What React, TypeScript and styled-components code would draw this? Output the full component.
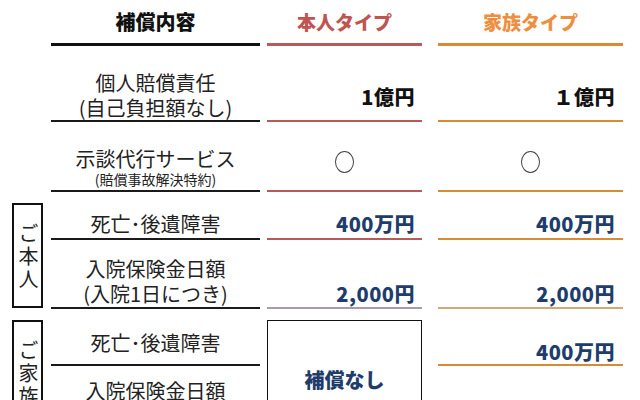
import React from "react";
import styled, { createGlobalStyle } from "styled-components";

const GlobalStyle = createGlobalStyle`
  html, body {
    margin: 0;
    padding: 0;
    background: #ffffff;
  }
  body {
    width: 640px;
    height: 400px;
    overflow: hidden;
    font-family: "Noto Sans CJK JP", "Noto Sans", sans-serif;
  }
`;

const RED = "#b85a5a";
const ORANGE = "#d98a35";
const NAVY = "#1f3d6b";

const Page = styled.div`
  width: 640px;
  height: 400px;
  overflow: hidden;
  background: #fff;
`;

const Faded = styled.div`
  height: 4px;
  overflow: hidden;
  padding-left: 44px;
  font-size: 15px;
  line-height: 8px;
  color: #e4e4e4;
  margin-top: -4px;
`;

const Table = styled.div`
  display: grid;
  grid-template-columns: 12px 31px 8px 209px 7px 155px 16px 185px;
  grid-template-rows: 46px 76px 70px 48px 69px 57px 60px;
`;

const Head = styled.div<{ $col: number; $color: string; $line: string; $size?: number }>`
  grid-column: ${(p) => p.$col};
  display: flex;
  align-items: flex-end;
  justify-content: center;
  padding-bottom: 9px;
  font-size: ${(p) => p.$size ?? 19}px;
  font-weight: 900;
  line-height: 25px;
  color: ${(p) => p.$color};
  border-bottom: 3px solid ${(p) => p.$line};
  box-sizing: border-box;
`;

const Item = styled.div<{ $pb?: number; $pt?: number; $last?: boolean }>`
  grid-column: 4;
  display: flex;
  flex-direction: column;
  align-items: center;
  justify-content: ${(p) => (p.$last ? "flex-start" : "flex-end")};
  padding-bottom: ${(p) => p.$pb ?? 0}px;
  padding-top: ${(p) => p.$pt ?? 0}px;
  border-bottom: ${(p) => (p.$last ? "none" : "2px solid #1a1a1a")};
  box-sizing: border-box;
  color: #222;
  font-size: 20px;
  line-height: 25px;
`;

const Line = styled.span`
  display: block;
  height: 25px;
`;

const Small = styled.span`
  display: block;
  font-size: 14px;
  line-height: 17px;
  height: 17px;
`;

const Value = styled.div<{ $col: number; $line?: string; $pb?: number; $center?: boolean; $ink?: string }>`
  grid-column: ${(p) => p.$col};
  display: flex;
  align-items: flex-end;
  justify-content: ${(p) => (p.$center ? "center" : "flex-end")};
  padding-right: ${(p) => (p.$center ? 0 : p.$col === 6 ? 7 : 8)}px;
  padding-bottom: ${(p) => p.$pb ?? 0}px;
  border-bottom: ${(p) => (p.$line ? `2.5px solid ${p.$line}` : "none")};
  box-sizing: border-box;
  color: ${(p) => p.$ink ?? NAVY};
  font-size: 20px;
  font-weight: 900;
  line-height: 25px;
  letter-spacing: 0.5px;
`;

const Circle = styled.div`
  width: 19px;
  height: 22px;
  border: 1.5px solid #444;
  border-radius: 50%;
  box-sizing: border-box;
`;

const Side = styled.div<{ $row: string }>`
  grid-column: 2;
  grid-row: ${(p) => p.$row};
  margin-top: 11px;
  margin-bottom: 1px;
  border: 2px solid #111;
  box-sizing: border-box;
  display: flex;
  justify-content: center;
  padding-top: 4px;
  color: #222;
  font-size: 20px;
  line-height: 26px;
  writing-mode: vertical-rl;
  letter-spacing: 3px;
`;

const NoCover = styled.div`
  grid-column: 6;
  grid-row: 6 / 8;
  margin-top: 11px;
  border: 1.5px solid #111;
  border-bottom: none;
  box-sizing: border-box;
  display: flex;
  justify-content: center;
  padding-top: 46px;
  color: ${NAVY};
  font-size: 20px;
  font-weight: 900;
  line-height: 25px;
`;

export default function App() {
  return (
    <Page>
      <GlobalStyle />
      <Faded>補償内容・保険金額のご案内</Faded>
      <Table>
        <Head $col={4} $color="#111" $line="#111" $size={20}>
          補償内容
        </Head>
        <Head $col={6} $color="#bf5450" $line={RED}>
          本人タイプ
        </Head>
        <Head $col={8} $color="#ec8f40" $line={ORANGE}>
          家族タイプ
        </Head>

        <Item $pb={0}>
          <Line>個人賠償責任</Line>
          <Line>(自己負担額なし)</Line>
        </Item>
        <Value $col={6} $line={RED} $pb={11} $ink="#111">
          1億円
        </Value>
        <Value $col={8} $line={ORANGE} $pb={11} $ink="#111">
          １億円
        </Value>

        <Item $pb={2}>
          <Line>示談代行サービス</Line>
          <Small>(賠償事故解決特約)</Small>
        </Item>
        <Value $col={6} $line={RED} $pb={17} $center>
          <Circle />
        </Value>
        <Value $col={8} $line={ORANGE} $pb={17} $center>
          <Circle />
        </Value>

        <Side $row="4 / 6">ご本人</Side>
        <Item $pb={2}>
          <Line>死亡･後遺障害</Line>
        </Item>
        <Value $col={6} $line={RED} $pb={2}>
          400万円
        </Value>
        <Value $col={8} $line={ORANGE} $pb={2}>
          400万円
        </Value>

        <Item $pb={1}>
          <Line>入院保険金日額</Line>
          <Line>(入院1日につき)</Line>
        </Item>
        <Value $col={6} $line="#a89aa8" $pb={1}>
          2,000円
        </Value>
        <Value $col={8} $line="#d2a878" $pb={1}>
          2,000円
        </Value>

        <Side $row="6 / 8">ご家族</Side>
        <Item $pb={9}>
          <Line>死亡･後遺障害</Line>
        </Item>
        <NoCover>補償なし</NoCover>
        <Value $col={8} $line={ORANGE} $pb={0}>
          400万円
        </Value>

        <Item $last $pt={12}>
          <Line>入院保険金日額</Line>
        </Item>
      </Table>
    </Page>
  );
}
